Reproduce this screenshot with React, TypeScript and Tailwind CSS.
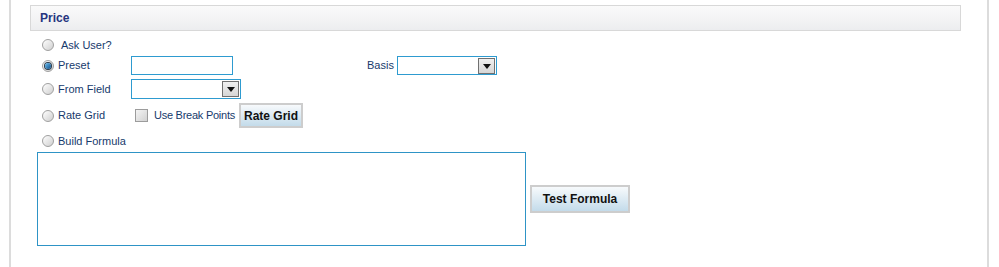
import React from 'react';

const FONT = { fontFamily: '"Liberation Sans", Arial, sans-serif' };

function Radio({ checked = false }: { checked?: boolean }) {
  return (
    <span className="relative flex h-[12px] w-[12px] shrink-0 items-center justify-center rounded-full border border-[#a0a0a0] bg-gradient-to-br from-[#ffffff] to-[#cfcfcf]">
      {checked && (
        <span className="h-[6px] w-[6px] rounded-full bg-gradient-to-br from-[#6cc0f0] to-[#0b4f8a] ring-1 ring-[#2a3a4a]" />
      )}
    </span>
  );
}

function DropButton() {
  return (
    <span className="flex h-[16px] w-[17px] items-center justify-center border-[1.5px] border-[#707070] bg-gradient-to-b from-[#f0f0f0] to-[#d6d6d6]">
      <svg width="8" height="5" viewBox="0 0 8 5" className="mt-[1px]">
        <path d="M0 0 L8 0 L4 5 Z" fill="#111" />
      </svg>
    </span>
  );
}

function Select({ width }: { width: string }) {
  return (
    <div className={`flex h-[19px] items-center justify-end border border-[#2e9bd0] bg-white pr-[1px] ${width}`}>
      <DropButton />
    </div>
  );
}

function Label({ children, className = '' }: { children: React.ReactNode; className?: string }) {
  return <span className={`text-[11px] leading-none text-[#173a6c] ${className}`}>{children}</span>;
}

function GradButton({ children, className = '' }: { children: React.ReactNode; className?: string }) {
  return (
    <button className={`flex items-center justify-center border-2 border-[#cdcdcd] bg-gradient-to-b from-[#f7fafc] to-[#c3dbea] text-[12px] font-bold text-[#111] ${className}`}>
      {children}
    </button>
  );
}

export default function App() {
  return (
    <div className="h-[267px] w-[999px] bg-white pl-[9px]" style={FONT}>
      <div className="flex h-full w-[980px] flex-col border-l-2 border-r-2 border-[#dcdcdc]">
        {/* Section header */}
        <div className="ml-[19px] mr-[26px] mt-[5px] flex h-[26px] items-center border border-[#d8d8d8] bg-gradient-to-b from-[#fafafa] via-[#f4f4f5] to-[#ecedef] pl-[9px]">
          <span className="text-[12px] font-bold text-[#26357f]">Price</span>
        </div>

        <div className="flex flex-col pl-[31px] pt-[5px]">
          {/* Ask User */}
          <div className="flex h-[18px] items-center">
            <Radio />
            <Label className="ml-[7px]">Ask User?</Label>
          </div>

          {/* Preset */}
          <div className="mt-[2px] flex h-[19px] items-center">
            <Radio checked />
            <Label className="ml-[4px] w-[73px]">Preset</Label>
            <div className="h-[19px] w-[102px] border border-[#2e9bd0] bg-white" />
            <Label className="ml-[134px] w-[30px]">Basis</Label>
            <Select width="w-[100px]" />
          </div>

          {/* From Field */}
          <div className="mt-[4px] flex h-[20px] items-center">
            <Radio />
            <Label className="ml-[4px] w-[73px]">From Field</Label>
            <Select width="w-[110px] h-[20px]" />
          </div>

          {/* Rate Grid */}
          <div className="mt-[4px] flex h-[25px] items-center">
            <Radio />
            <Label className="ml-[4px] w-[73px]">Rate Grid</Label>
            <span className="ml-[4px] h-[13px] w-[13px] border border-[#9c9c9c] bg-gradient-to-br from-[#f4f4f4] to-[#d2d2d2]" />
            <Label className="ml-[6px] tracking-[-0.25px]">Use Break Points</Label>
            <GradButton className="ml-[4px] h-[25px] w-[64px]">Rate Grid</GradButton>
          </div>

          {/* Build Formula */}
          <div className="mt-[4px] flex h-[18px] items-center">
            <Radio />
            <Label className="ml-[4px]">Build Formula</Label>
          </div>
        </div>

        {/* Formula area */}
        <div className="ml-[26px] mt-[2px] flex items-center">
          <div className="h-[94px] w-[489px] border border-[#2e94c6] bg-white" />
          <GradButton className="ml-[4px] h-[28px] w-[100px]">Test Formula</GradButton>
        </div>
      </div>
    </div>
  );
}
